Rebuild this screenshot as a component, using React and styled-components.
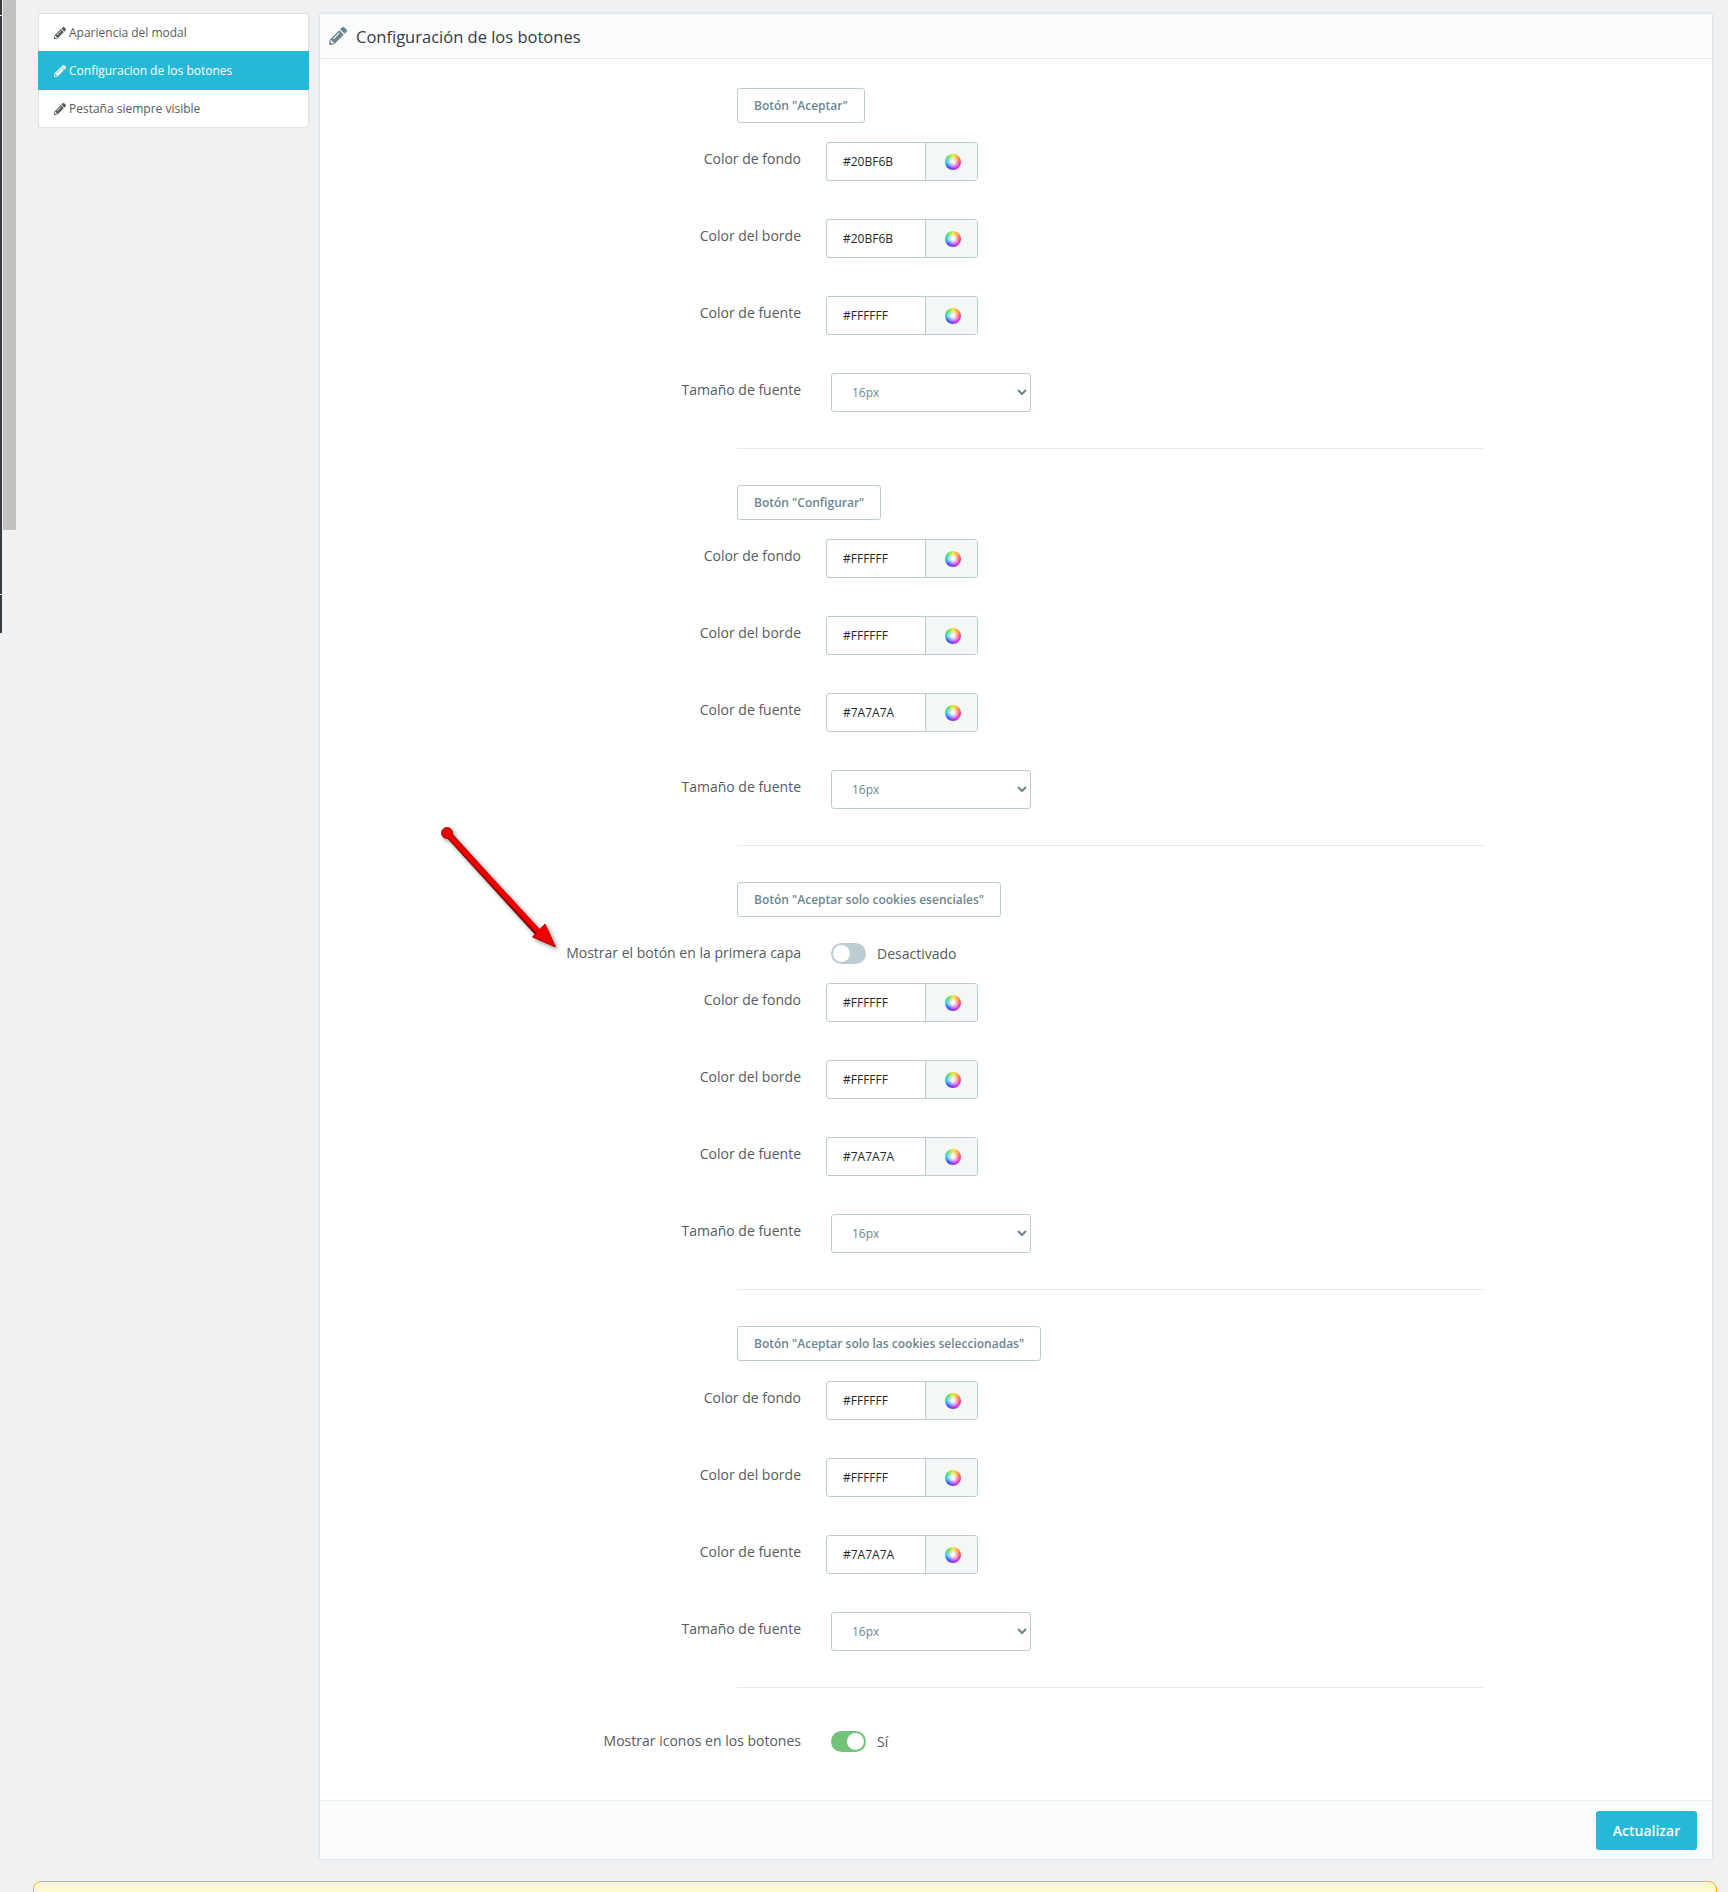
import React from "react";
import styled, { createGlobalStyle } from "styled-components";
import { FaPencilAlt } from "react-icons/fa";

const Global = createGlobalStyle`
  html, body { margin: 0; padding: 0; background: #eff1f2; }
  body { font-family: "Open Sans", "Liberation Sans", sans-serif; color: #363a41; }
  * { box-sizing: border-box; }
`;

const Page = styled.div`
  position: relative;
  height: 1892px;
  overflow: hidden;
  padding: 13px 15px 0 38px;
`;
const Columns = styled.div`
  display: flex;
  align-items: flex-start;
  gap: 10px;
`;
const Sidebar = styled.nav`
  width: 271px;
  flex: none;
  background: #fff;
  border: 1px solid #dfe3e5;
  border-radius: 3px;
  box-shadow: 0 0 2px rgba(0, 0, 0, 0.05);
`;
const NavItem = styled.a`
  display: flex;
  align-items: center;
  gap: 3px;
  height: ${(p) => (p.$active ? "39px" : "37px")};
  margin: 0 ${(p) => (p.$active ? "-1px" : "0")};
  padding-left: ${(p) => (p.$active ? "16px" : "15px")};
  font-size: 12px;
  background: ${(p) => (p.$active ? "#25b9d7" : "transparent")};
  color: ${(p) => (p.$active ? "#fff" : "#555b60")};
  svg { width: 12px; height: 12px; }
`;
const Panel = styled.section`
  width: 1394px;
  flex: none;
  background: #fff;
  border: 1px solid #dbe6e9;
  border-radius: 3px;
  box-shadow: 0 0 4px rgba(0, 0, 0, 0.05);
`;
const PanelHeader = styled.header`
  display: flex;
  align-items: center;
  gap: 9px;
  height: 45px;
  padding-left: 9px;
  background: #fafbfc;
  border-bottom: 1px solid #dbe6e9;
  font-size: 16.5px;
  color: #363a41;
  svg { width: 18px; height: 18px; color: #6c868e; }
`;
const PanelBody = styled.div`
  padding-top: 29px;
  height: 1741px;
`;
const Section = styled.div``;
const Legend = styled.div`
  display: flex;
  align-items: center;
  width: max-content;
  height: 35px;
  margin: 0 0 ${(p) => (p.$tall ? "20px" : "19px")} 417px;
  padding: 0 16px;
  border: 1px solid #bbcdd2;
  border-radius: 3px;
  font-size: 12px;
  font-weight: 600;
  color: #6c868e;
`;
const Row = styled.div`
  display: grid;
  grid-template-columns: 481px 1fr;
  column-gap: 25px;
  align-items: center;
  margin-bottom: 38px;
`;
const SelectRow = styled(Row)`
  margin-bottom: 0;
`;
const ToggleRow = styled(Row)`
  height: 21px;
  margin-top: 26px;
  margin-bottom: 19px;
`;
const Label = styled.label`
  text-align: right;
  font-size: 14px;
  color: #555b60;
  line-height: 19px;
  position: relative;
  top: ${(p) => (p.$flat ? "-1px" : "-3px")};
`;
const ColorField = styled.div`
  display: flex;
  width: 152px;
  height: 39px;
  border: 1px solid #bbcdd2;
  border-radius: 3px;
  overflow: hidden;
`;
const ColorValue = styled.div`
  width: 99px;
  padding-left: 16px;
  display: flex;
  align-items: center;
  font-size: 12px;
  color: #25282b;
  border-right: 1px solid #bbcdd2;
`;
const ColorAddon = styled.div`
  flex: 1;
  display: flex;
  align-items: center;
  justify-content: center;
  padding-left: 2px;
  background: #f4f7f8;
`;
const Wheel = styled.span`
  display: block;
  width: 16px;
  height: 16px;
  border-radius: 50%;
  background:
    radial-gradient(circle, rgba(255,255,255,0.95) 0 12%, rgba(255,255,255,0) 62%),
    conic-gradient(#f2e43a, #ff9a3a, #ff4060, #e030d0, #8a30f0, #3050f5, #30c8e8, #50e060, #f2e43a);
`;
const Select = styled.select`
  width: 200px;
  height: 39px;
  margin-left: 5px;
  padding-left: 16px;
  background: #fff;
  border: 1px solid #bbcdd2;
  border-radius: 3px;
  font-family: inherit;
  font-size: 12px;
  color: #6c868e;
`;
const ToggleWrap = styled.div`
  display: flex;
  align-items: center;
  gap: 11px;
  margin-left: 5px;
  font-size: 14px;
  color: #555b60;
`;
const Track = styled.span`
  display: block;
  position: relative;
  width: 35px;
  height: 21px;
  border-radius: 11px;
  background: ${(p) => (p.$on ? "#72c279" : "#bbcdd2")};
  &::after {
    content: "";
    position: absolute;
    top: 2px;
    left: ${(p) => (p.$on ? "16px" : "2px")};
    width: 17px;
    height: 17px;
    border-radius: 50%;
    background: #fff;
  }
`;
const Divider = styled.hr`
  width: 747px;
  height: 1px;
  margin: 36px 0 36px 417px;
  border: 0;
  background: #e6ecee;
`;
const LastRow = styled(Row)`
  margin: 43px 0 0;
`;
const PanelFooter = styled.footer`
  display: flex;
  justify-content: flex-end;
  align-items: center;
  height: 59px;
  padding: 0 15px 0 0;
  background: #fafbfc;
  border-top: 1px solid #e6ecee;
`;
const SaveButton = styled.button`
  width: 101px;
  height: 39px;
  border: 0;
  border-radius: 3px;
  background: #25b9d7;
  color: #fff;
  font-family: inherit;
  font-size: 14px;
  font-weight: 600;
`;
const Notice = styled.div`
  height: 40px;
  margin: 21px -4px 0 -5px;
  background: #fffbd3;
  border: 1px solid #fab000;
  border-radius: 8px;
`;
const Scrollbar = styled.div`
  position: absolute;
  left: 3px;
  top: 0;
  width: 13px;
  height: 530px;
  background: #c1c1c1;
`;
const EdgeLine = styled.div`
  position: absolute;
  left: 0;
  top: 0;
  width: 2px;
  height: 633px;
  background: linear-gradient(#363a41 0 15px, #fff 15px 16px, #363a41 16px 594px, #fff 594px 595px, #363a41 595px);
`;
const Arrow = styled.svg`
  position: absolute;
  left: 430px;
  top: 820px;
  overflow: visible;
  filter: drop-shadow(2px 2px 2px rgba(0, 0, 0, 0.45));
`;

const ColorRow = ({ label, value }) => (
  <Row>
    <Label>{label}</Label>
    <ColorField>
      <ColorValue>{value}</ColorValue>
      <ColorAddon><Wheel /></ColorAddon>
    </ColorField>
  </Row>
);

const SizeRow = () => (
  <SelectRow>
    <Label>Tamaño de fuente</Label>
    <Select defaultValue="16px">
      <option>16px</option>
    </Select>
  </SelectRow>
);

const Group = ({ title, colors, extra, tall }) => (
  <Section>
    <Legend $tall={tall}>{title}</Legend>
    {extra}
    <ColorRow label="Color de fondo" value={colors[0]} />
    <ColorRow label="Color del borde" value={colors[1]} />
    <ColorRow label="Color de fuente" value={colors[2]} />
    <SizeRow />
  </Section>
);

const ToggleField = ({ on, text }) => (
  <ToggleWrap>
    <Track $on={on} />
    <span>{text}</span>
  </ToggleWrap>
);

export default function App() {
  return (
    <Page>
      <Global />
      <Columns>
        <Sidebar>
          <NavItem><FaPencilAlt />Apariencia del modal</NavItem>
          <NavItem $active><FaPencilAlt />Configuracion de los botones</NavItem>
          <NavItem><FaPencilAlt />Pestaña siempre visible</NavItem>
        </Sidebar>
        <Panel>
          <PanelHeader><FaPencilAlt />Configuración de los botones</PanelHeader>
          <PanelBody>
            <Group title={'Botón "Aceptar"'} colors={["#20BF6B", "#20BF6B", "#FFFFFF"]} />
            <Divider />
            <Group title={'Botón "Configurar"'} colors={["#FFFFFF", "#FFFFFF", "#7A7A7A"]} />
            <Divider />
            <Group
              title={'Botón "Aceptar solo cookies esenciales"'}
              colors={["#FFFFFF", "#FFFFFF", "#7A7A7A"]}
              extra={
                <ToggleRow>
                  <Label $flat>Mostrar el botón en la primera capa</Label>
                  <ToggleField text="Desactivado" />
                </ToggleRow>
              }
            />
            <Divider />
            <Group tall title={'Botón "Aceptar solo las cookies seleccionadas"'} colors={["#FFFFFF", "#FFFFFF", "#7A7A7A"]} />
            <Divider />
            <LastRow>
              <Label $flat>Mostrar iconos en los botones</Label>
              <ToggleField on text="Sí" />
            </LastRow>
          </PanelBody>
          <PanelFooter><SaveButton>Actualizar</SaveButton></PanelFooter>
        </Panel>
      </Columns>
      <Notice />
      <EdgeLine />
      <Scrollbar />
      <Arrow width="130" height="130" viewBox="0 0 130 130">
        <line x1="17" y1="13" x2="110" y2="115" stroke="#8a0000" strokeWidth="7" />
        <circle cx="17" cy="13" r="5.5" fill="#e60000" stroke="#8a0000" strokeWidth="0.8" />
        <polygon points="125.5,127 102.5,117 115,104" fill="#ee0000" stroke="#8a0000" strokeWidth="0.8" />
        <line x1="17" y1="13" x2="110" y2="113" stroke="#ee0000" strokeWidth="5" />
      </Arrow>
    </Page>
  );
}
